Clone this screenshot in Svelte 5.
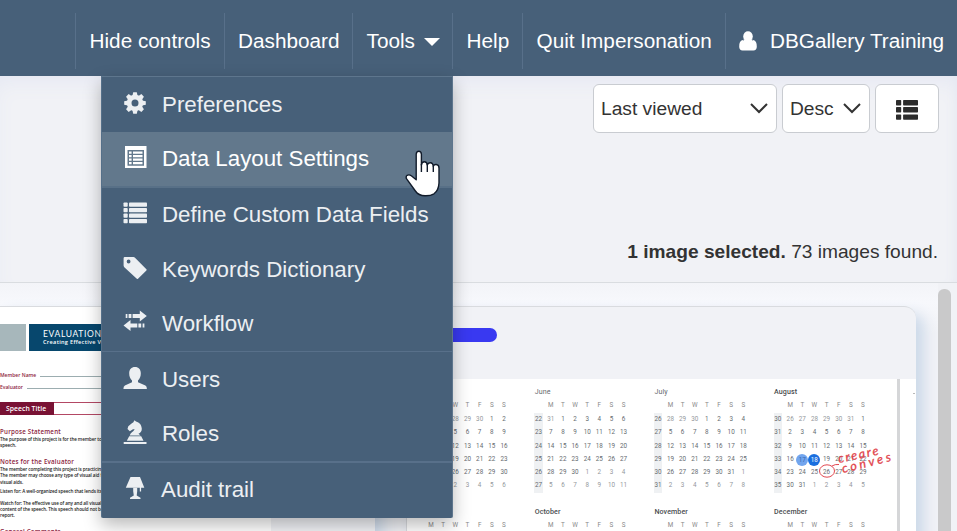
<script>
  const topLeft = ['Hide controls', 'Dashboard'];

  const menu = [
    { label: 'Preferences', icon: 'cog', h: 55 },
    { label: 'Data Layout Settings', icon: 'listalt', h: 56, active: true },
    { label: 'Define Custom Data Fields', icon: 'thlist', h: 54 },
    { label: 'Keywords Dictionary', icon: 'tag', h: 55 },
    { label: 'Workflow', icon: 'transfer', h: 54 },
    { label: 'Users', icon: 'user', h: 56, line: 1 },
    { label: 'Roles', icon: 'knight', h: 54 },
    { label: 'Audit trail', icon: 'lamp', h: 56, line: 2 }
  ];

  const letters = ['M', 'T', 'W', 'T', 'F', 'S', 'S'];

  function build(name, start, prevLen, len, week) {
    const rows = [];
    const offset = start > 1 ? prevLen - start + 1 : 0;
    for (let r = 0; r < 6; r++) {
      const days = [];
      for (let c = 0; c < 7; c++) {
        const n = r * 7 + c - offset + 1;
        if (n < 1) days.push({ d: n + prevLen, out: true });
        else if (n > len) days.push({ d: n - len, out: true });
        else days.push({ d: n, mark: name === 'August' && (n === 17 ? 'soft' : n === 18 ? 'full' : '') });
      }
      rows.push({ week: week + r, days });
    }
    return { name, rows };
  }

  const months = [
    build('May', 26, 30, 31, 17),
    build('June', 31, 31, 30, 22),
    build('July', 28, 30, 31, 26),
    build('August', 26, 31, 31, 30),
    { name: 'September', rows: [] },
    { name: 'October', rows: [] },
    { name: 'November', rows: [] },
    { name: 'December', rows: [] }
  ];
</script>

{#snippet icon(name)}
  <svg class="ico" viewBox="0 0 24 24" width="24" height="24" fill="currentColor">
    {#if name === 'cog'}
      <g transform="translate(12 12)">
        <path fill-rule="evenodd" d="M-8.2 0a8.2 8.2 0 1 0 16.4 0a8.2 8.2 0 1 0-16.4 0M-3.5 0a3.5 3.5 0 1 1 7 0a3.5 3.5 0 1 1-7 0" />
        {#each [0, 45, 90, 135, 180, 225, 270, 315] as a}
          <path d="M-2.6-7L-1.8-10.8H1.8L2.6-7Z" transform="rotate({a})" />
        {/each}
      </g>
    {:else if name === 'listalt'}
      <path fill-rule="evenodd" d="M2 1H23.5V23H2ZM4.5 5V20.8H21V5Z" />
      <path d="M6 6.5h2.6v2.3H6zM10 6.5h9.5v2.3H10zM6 10h2.6v2.3H6zM10 10h9.5v2.3H10zM6 13.5h2.6v2.3H6zM10 13.5h9.5v2.3H10zM6 17h2.6v2.3H6zM10 17h9.5v2.3H10z" />
    {:else if name === 'thlist'}
      {#each [1.5, 7, 12.4, 17.9] as y}
        <rect x=".5" {y} width="4.2" height="4.3" rx=".8" /><rect x="6" {y} width="18" height="4.3" rx=".8" />
      {/each}
    {:else if name === 'tag'}
      <path fill-rule="evenodd" d="M.6 2.2Q.6 1 1.8 1H10.4Q11.4 1 12 1.7L23.4 13.2Q24 13.8 23.4 14.4L15 22.7Q14.4 23.3 13.8 22.7L1.3 11.2Q.6 10.5 .6 9.6ZM3.7 5.5a1.9 1.9 0 1 0 3.8 0a1.9 1.9 0 1 0-3.8 0" />
    {:else if name === 'transfer'}
      <path d="M2.7 5h1.7v4H2.7zM5.6 5h2.8v4H5.6zM9.6 5h7.2V1.6L23.8 7L16.8 12.4V9H9.6zM.5 16.5L7.5 11.1V14.5H14.3V18.5H7.5V21.9zM15.4 14.5h2.8v4h-2.8zM19.6 14.5h1.8v4h-1.8z" />
    {:else if name === 'user'}
      <path d="M12 1C15.7 1 17.8 3.4 17.8 7.2C17.8 10.3 16.9 12.6 15 14.4V16.2L22.4 19.5Q23.9 20.3 23.9 23H.4Q.4 20.3 1.9 19.5L9 16.2V14.4C7.1 12.6 6.2 10.3 6.2 7.2C6.2 3.4 8.3 1 12 1Z" />
    {:else if name === 'knight'}
      <path d="M10.2 2.5L11.5.2L13 1.6C16.5 2.4 18.7 5.4 18.8 8.7C18.9 11.2 17.5 12.8 15.5 13.8L17.6 15.5H6.7C7.2 13 10.4 11.7 11.7 9.3L10 9.2L6.8 11.2L4.5 9L5.3 6.2L9.2 3Z" />
      <path d="M6.2 16.2H18.2L20.5 20.8H3.8ZM.7 22h22.8v2H.7z" />
    {:else}
      <path d="M7.5 1H17L21.3 11.8H2.8Z" />
      <path d="M10.2 11.8h4v3.4l-.5 4.3l3.8 2.3V23H7V21.8l3.8-2.3l-.6-4.3zM16.8 11h1.3v4.5h-1.3z" />
    {/if}
  </svg>
{/snippet}

<div class="screen">
  <nav>
    {#each topLeft as t, i}
      <div class="tab t{i}">{t}</div>
    {/each}
    <div class="tab tools">Tools<span class="caret"></span></div>
    <div class="tab help">Help</div>
    <div class="tab quit">Quit Impersonation</div>
    <div class="tab account">
      <svg viewBox="0 0 18 20" width="18" height="20" fill="#fff">
        <path d="M3.7 9.1C5 10.6 6.8 11.4 9 11.4S13 10.6 14.3 9.1C17 9.8 17.8 12 17.8 15.7C17.8 18 16.5 19.4 14.5 19.4H3.5C1.5 19.4.2 18 .2 15.7C.2 12 1 9.8 3.7 9.1Z" />
        <ellipse cx="9" cy="5.4" rx="4.8" ry="5.1" />
        <rect x="4.5" y="8.5" width="9" height="4" />
      </svg>
      DBGallery Training
    </div>
  </nav>

  <header>
    <div class="controls">
      <div class="select wide"><span>Last viewed</span>
        <svg viewBox="0 0 18 11" width="18" height="11"><path d="M1 1L9 9L17 1" /></svg>
      </div>
      <div class="select narrow"><span>Desc</span>
        <svg viewBox="0 0 18 11" width="18" height="11"><path d="M1 1L9 9L17 1" /></svg>
      </div>
      <div class="select list">
        <svg class="fill" viewBox="0 0 22 20" width="22" height="20">
          {#each [0, 7, 14.4] as y}
            <rect x="0" {y} width="5.2" height="5.4" rx=".7" /><rect x="7.1" {y} width="14.9" height="5.4" rx=".7" />
          {/each}
        </svg>
      </div>
    </div>
    <div class="status"><b>1 image selected.</b> 73 images found.</div>
  </header>

  <main>
    <div class="gallery">
      <div class="card first">
        <div class="doc">
          <div class="banner">
            <div class="grey"></div>
            <div class="blue"><div class="big">EVALUATION FORM</div><div class="sub">Creating Effective Visual Aids</div></div>
          </div>
          <div class="field name">Member Name<i></i></div>
          <div class="field">Evaluator<i></i></div>
          <div class="speech"><span>Speech Title</span></div>
          <h4 class="a">Purpose Statement</h4>
          <p>The purpose of this project is for the member to practice</p>
          <p>speech.</p>
          <h4 class="b">Notes for the Evaluator</h4>
          <p>The member completing this project is practicing</p>
          <p>The member may choose any type of visual aid for</p>
          <p>visual aids.</p>
          <p class="gap">Listen for: A well-organized speech that lends itself</p>
          <p class="gap5">Watch for: The effective use of any and all visual aids</p>
          <p>content of the speech. This speech should not be a</p>
          <p>report.</p>
          <h4 class="c">General Comments</h4>
        </div>
      </div>

      <div class="card second">
        <div class="pill"></div>
        <div class="shot">
          <div class="calendar">
            {#each months as m, mi}
              <div class="month">
                <div class="mname" class:strong={mi === 3 || mi > 4}>{m.name}</div>
                <div class="week head"><span></span>{#each letters as l}<span>{l}</span>{/each}</div>
                {#each m.rows as r}
                  <div class="week">
                    <span class="wk">{r.week}</span>
                    {#each r.days as d}<span class:out={d.out} class={d.mark || ''}>{d.d}</span>{/each}
                  </div>
                {/each}
              </div>
            {/each}
          </div>
          <div class="divider"></div>
          <div class="dot"></div>
          <svg class="ink" viewBox="0 0 80 40" width="80" height="40">
            <ellipse cx="12" cy="25" rx="7.5" ry="6.2" />
            <path d="M17 20Q20 18 24 18.5" />
            <text x="24" y="17" transform="rotate(-12 24 17)" textLength="41">creare</text>
            <text x="28" y="27" transform="rotate(-14 28 27)" textLength="50">conves</text>
          </svg>
        </div>
      </div>
    </div>
    <div class="scroll"></div>
  </main>

  <div class="menu">
    {#each menu as m}
      <div class="item {m.icon}" class:active={m.active} style="height:{m.h}px;border-top-width:{m.line || 0}px">
        {@render icon(m.icon)}<span>{m.label}</span>
      </div>
    {/each}
  </div>

  <svg class="hand" viewBox="0 0 36 48" width="36" height="48">
    <path d="M11.2 26V4.2Q11.4 1.2 13.8 1.2Q16.2 1.2 16.4 4.2V15Q16.8 11.8 19.4 11.8Q22 11.8 22.3 15Q23 12.6 25.5 12.8Q28 13 28.3 16.3Q29 14.2 31.3 14.5Q34 14.9 34 18V33Q33.6 40.5 29 43.8Q25.5 46 20 45.8Q13.5 45.6 10.4 41L1.8 29.2Q.3 26.7 2.2 25.3Q4.2 24.2 6.6 26L11.2 29.8Z" fill="#fff" stroke="#111b2a" stroke-width="1.4" stroke-linejoin="round" />
    <path d="M16.4 14V22M22.3 14V22M28.3 16V22" stroke="#111b2a" stroke-width="1.4" fill="none" />
  </svg>
</div>

<style>
  :global(body) { overflow: hidden; }
  .screen {
    position: relative;
    width: 957px;
    height: 531px;
    overflow: hidden;
    display: flex;
    flex-direction: column;
    background: #f1f2f6;
    font-family: 'Liberation Sans', Arial, sans-serif;
    color: #333;
  }
  .screen * { box-sizing: border-box; }

  nav {
    flex: none;
    height: 76px;
    display: flex;
    align-items: flex-start;
    padding: 13px 0 0 75px;
    background: #476079;
    color: #fff;
    font-size: 20.75px;
  }
  .tab {
    height: 56px;
    padding-left: 13.5px;
    border-left: 1px solid #58708a;
    display: flex;
    align-items: center;
    white-space: nowrap;
    flex: none;
  }
  .t0 { width: 149px; }
  .t1 { width: 128px; padding-left: 13px; }
  .tools { width: 100px; }
  .help { width: 70px; }
  .quit { width: 203px; }
  .account { width: 232px; padding-left: 13px; gap: 13px; }
  .account svg { margin-top: -1px; }
  .caret {
    margin: 1px 0 0 9px;
    border: 8px solid transparent;
    border-top-color: #fff;
    border-bottom-width: 0;
  }

  header {
    flex: none;
    height: 207px;
    padding: 8px 18px 0 0;
    border-bottom: 1px solid #d9dce0;
    box-shadow: inset 0 12px 22px -8px #e4e7f3, inset -8px 0 10px -6px #e9ebf1;
  }
  .controls { display: flex; justify-content: flex-end; gap: 5px; }
  .select {
    height: 49px;
    display: flex;
    align-items: center;
    justify-content: space-between;
    padding: 0 9px 0 7px;
    background: #fff;
    border: 1px solid #c9ccd1;
    border-radius: 6px;
    font-size: 19.2px;
  }
  .select span { padding-top: 1px; }
  .select svg { fill: none; stroke: #333; stroke-width: 2; }
  .select .fill { fill: #2c2c2c; stroke: none; }
  .wide { width: 184px; padding-right: 8px; }
  .narrow { width: 88px; padding-right: 8px; }
  .list { width: 64px; justify-content: center; padding: 3px 0 0; }
  .status { margin-top: 107px; line-height: 24px; text-align: right; font-size: 19.15px; padding-right: 1px; }

  main { flex: 1; min-height: 0; display: flex; overflow: hidden; background: #f1f2f6; }
  .gallery { width: 938px; flex: none; display: flex; gap: 31px; padding-top: 23px; background: linear-gradient(#f3f4f8, #f7f8fc 20px, #f1f2f6 50px); }
  .scroll { margin-top: 6px; width: 13px; height: 270px; border-radius: 6px; background: #c9c9ca; }
  .card {
    height: 260px;
    background: #f1f2f6;
    border-top: 1px solid #d9dbdf;
    box-shadow: 8px 8px 14px #ccd9e9;
    flex: none;
  }
  .first { width: 375px; }
  .second { width: 510px; border-left: 1px solid #d9dbdf; border-radius: 12px 12px 0 0; }

  .doc { width: 271px; height: 240px; background: #fff; padding-top: 17px; font-family: Lato, sans-serif; white-space: nowrap; overflow: hidden; color: #222; }
  .banner { display: flex; height: 27px; gap: 3px; }
  .grey { width: 26px; background: #a7b7bb; }
  .blue { width: 230px; background: #07476d; color: #fff; padding: 5px 0 0 14px; }
  .big { font-size: 8.5px; line-height: 10px; letter-spacing: .65px; }
  .sub { font: 600 5.6px/7px 'Open Sans', sans-serif; letter-spacing: .3px; }
  .field { display: flex; align-items: center; gap: 4px; height: 12px; font: 600 5px/12px 'Open Sans', sans-serif; color: #8d2440; }
  .field i { flex: 1; height: 1px; background: #9cadb0; margin-top: 2px; }
  .name { margin-top: 18px; }
  .speech { margin-top: 9px; height: 13px; border: solid #b34864; border-width: 1px 0; display: flex; }
  .speech span { margin: -1px 0; width: 54px; padding-left: 6px; background: #791234; color: #fff; font: 600 6.8px/13px 'Open Sans', sans-serif; letter-spacing: .05px; }
  h4 { margin: 0; font: 600 6.2px/8px 'Open Sans', sans-serif; color: #8b1d3e; letter-spacing: .2px; }
  .a { margin-top: 13px; }
  .b { margin-top: 9.5px; }
  .c { margin-top: 9.5px; }
  p { margin: 0; font: 600 4.6px/6.3px 'Open Sans', sans-serif; letter-spacing: -.1px; }
  .gap { margin-top: 3.5px; }
  .gap5 { margin-top: 5px; }

  .pill { margin: 21px 0 0 30px; width: 60px; height: 14px; border-radius: 7px; background: #3939f1; }
  .shot { position: relative; margin-top: 37px; height: 180px; background: #fff; display: flex; }
  .calendar {
    width: 490px;
    padding: 6px 0 0 7.5px;
    flex: none;
    display: grid;
    grid-template-columns: repeat(4, 119.7px);
    grid-auto-rows: 120px;
    font-family: Roboto, sans-serif;
    color: #666b70;
  }
  .mname { height: 13px; padding-left: .5px; font-size: 7.1px; line-height: 13px; letter-spacing: .1px; }
  .strong { font-weight: 500; color: #4a4d50; }
  .week { display: grid; grid-template-columns: 8.5px repeat(7, 12.15px); height: 13.3px; line-height: 13.3px; font-size: 6.3px; text-align: center; }
  .week span:nth-child(n + 2) { position: relative; left: 2px; }
  .head { height: 15px; line-height: 15px; color: #888; }
  .wk { background: #eff1f3; }
  .out { color: #94989c; }
  .soft, .full { width: 12px; height: 12px; line-height: 12px; border-radius: 6px; align-self: center; color: #fff; background: #1a6fdf; }
  .soft { background: #72a5ee; color: #3767b0; }
  .divider { width: 3px; background: #d5d6d8; margin-left: 0; }
  .dot { width: 2px; height: 1px; background: #b8b8b8; margin: 14px 0 0 13px; }
  .ink { position: absolute; left: 408px; top: 67px; fill: none; stroke: #e2474f; stroke-width: 1; overflow: visible; }
  .ink text { fill: #df3d46; stroke-width: .3; font: italic 12.5px Lato, cursive; }

  .menu {
    position: absolute;
    left: 101px;
    top: 76px;
    width: 352px;
    height: 442px;
    border-top: 1px solid #5e768d;
    border-right: 1px solid #5e768d;
    border-left: 1px solid #55708a;
    border-radius: 0 0 2px 2px;
    background: #476079;
    box-shadow: 0 7px 18px rgba(0, 0, 0, .28);
    color: #eceff2;
  }
  .item {
    display: flex;
    align-items: center;
    gap: 15px;
    padding: 0 0 0 21px;
    border-top: 0 solid #58708a;
    font-size: 22.32px;
    white-space: nowrap;
  }
  .ico { flex: none; margin-top: -4px; }
  .active { background: #62788c; color: #fff; border-bottom: 2px solid #587087; }
  .transfer .ico { margin-top: -6px; }
  .lamp { gap: 14px; }
  .hand { position: absolute; left: 405px; top: 149.5px; }
</style>
